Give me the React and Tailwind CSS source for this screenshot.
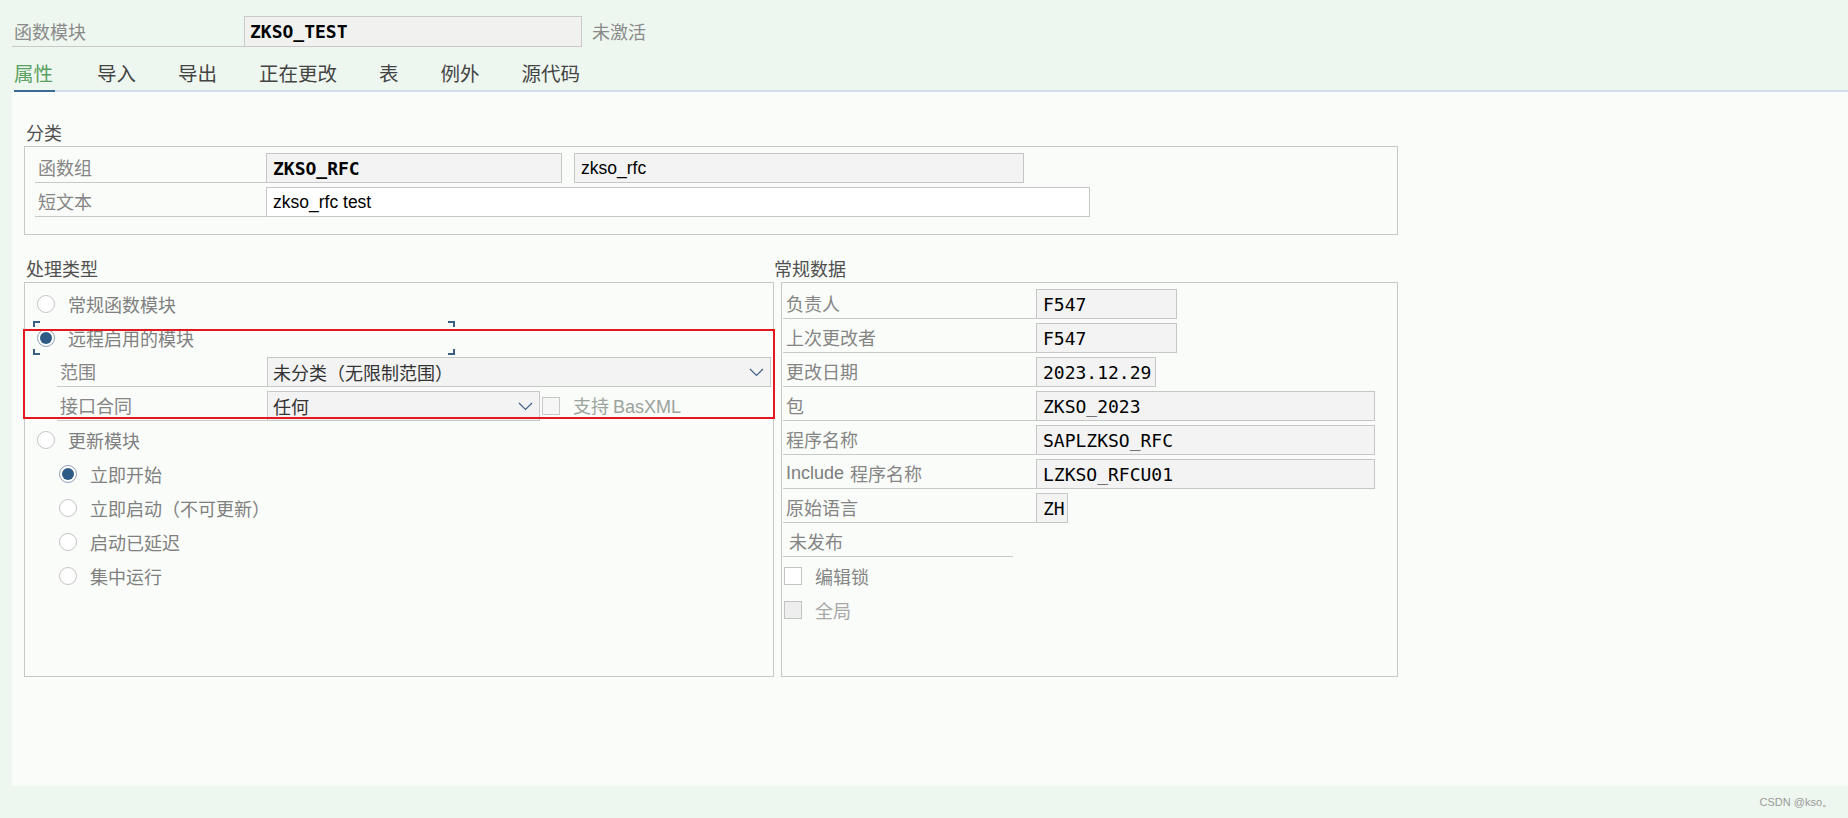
import React from "react";

const mono = "font-['DejaVu_Sans_Mono',monospace]";
const sans = "font-['Liberation_Sans',Arial,sans-serif]";

const Label = ({ w, children, pl = "pl-[3px]" }) => (
  <div className={`${w} ${pl} h-[30px] shrink-0 border-b border-[#c9c9c9] flex items-center text-[18px] text-[#858585]`}>
    {children}
  </div>
);

const Field = ({ w, children, white, font = mono }) => (
  <div
    className={`${w} ${font} h-[30px] shrink-0 border border-[#c6c6c6] ${
      white ? "bg-white" : "bg-[#f3f3f3]"
    } flex items-center pl-[6px] text-[18px] text-black`}
  >
    {children}
  </div>
);

const Radio = ({ on }) => (
  <span
    className={`w-[18px] h-[18px] shrink-0 rounded-full border bg-white flex items-center justify-center ${
      on ? "border-[#8fa2b6]" : "border-[#c4c4c4]"
    }`}
  >
    {on && <span className="w-[12px] h-[12px] rounded-full bg-[#2e5b86]" />}
  </span>
);

const Check = ({ disabled }) => (
  <span
    className={`w-[18px] h-[18px] shrink-0 border border-[#c3c3c3] ${disabled ? "bg-[#eeeeee]" : "bg-white"}`}
  />
);

const Chevron = () => (
  <svg width="15" height="9" viewBox="0 0 15 9" fill="none">
    <path d="M1 1l6.5 6.5L14 1" stroke="#40618a" strokeWidth="1.2" />
  </svg>
);

const RadioRow = ({ on, indent = "pl-[12px]", children }) => (
  <div className={`${indent} h-[30px] flex items-center gap-[13px] text-[18px] text-[#808080]`}>
    <Radio on={on} />
    <span>{children}</span>
  </div>
);

const Tab = ({ active, children }) =>
  active ? (
    <div className="h-[44px] -mb-[2px] pt-[8px] pr-[2px] border-b-2 border-[#3d6a92] flex items-center text-[19.5px] text-[#5aa05e]">
      {children}
    </div>
  ) : (
    <div className="h-[42px] pt-[8px] flex items-center text-[19.5px] text-[#444]">{children}</div>
  );

export default function App() {
  return (
    <div className="w-[1848px] h-[818px] bg-[#eef7ef] flex flex-col overflow-hidden font-['Noto_Sans_CJK_SC','Noto_Sans',sans-serif]">
      {/* header */}
      <div className="flex items-end pl-[12px] pt-[16px]">
        <div className="w-[232px] h-[31px] border-b border-[#cacaca] flex items-center pl-[2px] text-[18px] text-[#8a8a8a]">
          函数模块
        </div>
        <div className={`w-[338px] h-[31px] border border-[#cacaca] bg-[#f1f2f0] flex items-center pl-[5px] ${mono} font-semibold text-[18px] text-black`}>
          ZKSO_TEST
        </div>
        <div className="h-[31px] flex items-center ml-[10px] text-[18px] text-[#8a8a8a]">未激活</div>
      </div>

      {/* tabs */}
      <div className="ml-[14px] mt-[1px] flex gap-[42px] border-b-2 border-[#d2deeb]">
        <Tab active>属性</Tab>
        <Tab>导入</Tab>
        <Tab>导出</Tab>
        <Tab>正在更改</Tab>
        <Tab>表</Tab>
        <Tab>例外</Tab>
        <Tab>源代码</Tab>
      </div>

      {/* content */}
      <div className="ml-[12px] h-[694px] shrink-0 bg-[#fafcf9] pl-[12px] pt-[28px]">
        <div className="w-[1374px]">
          <div className="h-[24px] mb-[2px] pl-[2px] flex items-center text-[18px] text-[#505050]">分类</div>
          <div className="border border-[#c8c8c8] pl-[10px] pt-[6px] pb-[17px] flex flex-col gap-[4px]">
            <div className="flex">
              <Label w="w-[231px]">函数组</Label>
              <Field w="w-[296px]">
                <span className="font-semibold">ZKSO_RFC</span>
              </Field>
              <div className="ml-[12px]">
                <Field w="w-[450px]" font={sans}>
                  <span className="text-[17.5px]">zkso_rfc</span>
                </Field>
              </div>
            </div>
            <div className="flex">
              <Label w="w-[231px]">短文本</Label>
              <Field w="w-[824px]" white font={sans}>
                <span className="text-[17.5px]">zkso_rfc test</span>
              </Field>
            </div>
          </div>

          <div className="flex mt-[21px]">
            {/* processing type */}
            <div className="w-[750px] shrink-0">
              <div className="h-[24px] mb-[2px] pl-[2px] flex items-center text-[18px] text-[#505050]">处理类型</div>
              <div className="relative h-[395px] border border-[#c8c8c8] pt-[6px] flex flex-col gap-[4px]">
                <RadioRow>常规函数模块</RadioRow>
                <div className="relative">
                  <RadioRow on>远程启用的模块</RadioRow>
                  <div className="absolute left-[8px] w-[422px] -top-[2px] -bottom-[2px]">
                    <span className="absolute left-0 top-0 w-[7px] h-[6px] border-l-2 border-t-2 border-[#3b5f86]" />
                    <span className="absolute right-0 top-0 w-[7px] h-[6px] border-r-2 border-t-2 border-[#3b5f86]" />
                    <span className="absolute left-0 bottom-0 w-[7px] h-[6px] border-l-2 border-b-2 border-[#3b5f86]" />
                    <span className="absolute right-0 bottom-0 w-[7px] h-[6px] border-r-2 border-b-2 border-[#3b5f86]" />
                  </div>
                </div>
                <div className="pl-[32px] flex">
                  <Label w="w-[210px]">范围</Label>
                  <div className="w-[504px] h-[30px] border border-[#c8c8c8] bg-[#f3f3f3] flex items-center justify-between pl-[5px] pr-[6px] text-[18px] text-[#333]">
                    <span>未分类（无限制范围）</span>
                    <Chevron />
                  </div>
                </div>
                <div className="pl-[32px] flex items-center">
                  <Label w="w-[210px]">接口合同</Label>
                  <div className="w-[273px] h-[30px] border border-[#c8c8c8] bg-[#f3f3f3] flex items-center justify-between pl-[5px] pr-[6px] text-[18px] text-[#333]">
                    <span>任何</span>
                    <Chevron />
                  </div>
                  <span className="ml-[2px] w-[18px] h-[18px] border border-[#c8c8c8] bg-[#f6f6f6]" />
                  <span className="ml-[13px] text-[18px] text-[#9ba39d]">
                    支持 <span className={sans}>BasXML</span>
                  </span>
                </div>
                <RadioRow>更新模块</RadioRow>
                <RadioRow on indent="pl-[34px]">立即开始</RadioRow>
                <RadioRow indent="pl-[34px]">立即启动（不可更新）</RadioRow>
                <RadioRow indent="pl-[34px]">启动已延迟</RadioRow>
                <RadioRow indent="pl-[34px]">集中运行</RadioRow>

                {/* red annotation frame */}
                <div className="absolute -left-[2px] top-[46px] w-[752px] h-[90px] border-2 border-[#e4161f]" />
              </div>
            </div>

            {/* general data */}
            <div className="flex-1">
              <div className="h-[24px] mb-[2px] flex items-center text-[18px] text-[#505050]">常规数据</div>
              <div className="ml-[7px] h-[395px] border border-[#c8c8c8] pt-[6px] flex flex-col gap-[4px]">
                <div className="flex ml-[1px]">
                  <Label w="w-[253px]">负责人</Label>
                  <Field w="w-[141px]">F547</Field>
                </div>
                <div className="flex ml-[1px]">
                  <Label w="w-[253px]">上次更改者</Label>
                  <Field w="w-[141px]">F547</Field>
                </div>
                <div className="flex ml-[1px]">
                  <Label w="w-[253px]">更改日期</Label>
                  <Field w="w-[120px]">2023.12.29</Field>
                </div>
                <div className="flex ml-[1px]">
                  <Label w="w-[253px]">包</Label>
                  <Field w="w-[339px]">ZKSO_2023</Field>
                </div>
                <div className="flex ml-[1px]">
                  <Label w="w-[253px]">程序名称</Label>
                  <Field w="w-[339px]">SAPLZKSO_RFC</Field>
                </div>
                <div className="flex ml-[1px]">
                  <Label w="w-[253px]">
                    <span className={`${sans} text-[#7d7d7d]`}>Include</span>
                    <span className="ml-[6px]">程序名称</span>
                  </Label>
                  <Field w="w-[339px]">LZKSO_RFCU01</Field>
                </div>
                <div className="flex ml-[1px]">
                  <Label w="w-[253px]">原始语言</Label>
                  <Field w="w-[32px]">ZH</Field>
                </div>
                <div className="flex ml-[1px]">
                  <Label w="w-[230px]" pl="pl-[6px]">未发布</Label>
                </div>
                <div className="h-[30px] ml-[2px] flex items-center gap-[13px] text-[18px] text-[#858585]">
                  <Check />
                  <span>编辑锁</span>
                </div>
                <div className="h-[30px] ml-[2px] flex items-center gap-[13px] text-[18px] text-[#a8a8a8]">
                  <Check disabled />
                  <span>全局</span>
                </div>
              </div>
            </div>
          </div>
        </div>
      </div>

      {/* footer */}
      <div className={`flex-1 flex items-center justify-end pr-[15px] text-[11px] text-[#9a9a9a] ${sans}`}>
        CSDN @kso。
      </div>
    </div>
  );
}
